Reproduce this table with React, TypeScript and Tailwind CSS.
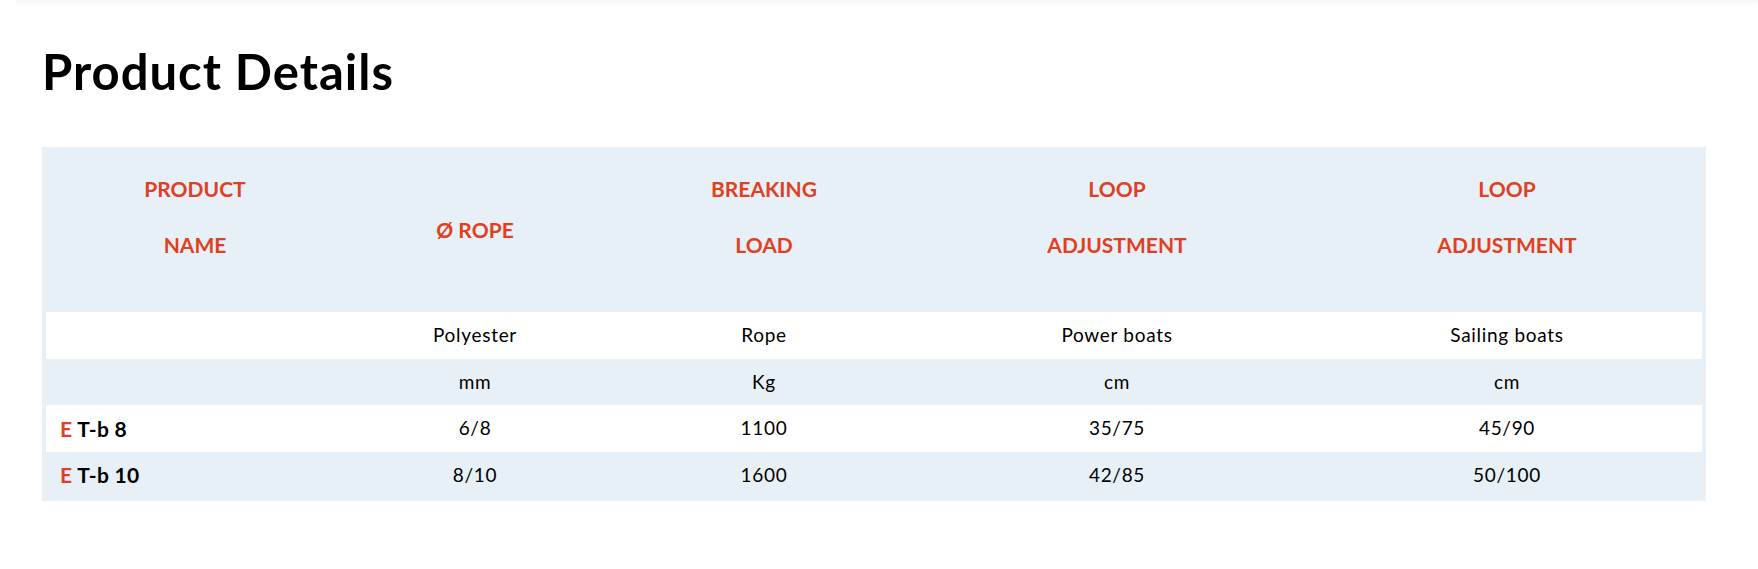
import { FC } from 'react';

const headers: Array<{ lines: string[] }> = [
  { lines: ['PRODUCT', 'NAME'] },
  { lines: ['Ø ROPE'] },
  { lines: ['BREAKING', 'LOAD'] },
  { lines: ['LOOP', 'ADJUSTMENT'] },
  { lines: ['LOOP', 'ADJUSTMENT'] },
];

const rows: Array<{ name?: string; cells: string[]; white: boolean; h: string }> = [
  { cells: ['Polyester', 'Rope', 'Power boats', 'Sailing boats'], white: true, h: 'h-[47px]' },
  { cells: ['mm', 'Kg', 'cm', 'cm'], white: false, h: 'h-[46px]' },
  { name: 'T-b 8', cells: ['6/8', '1100', '35/75', '45/90'], white: true, h: 'h-[47px]' },
  { name: 'T-b 10', cells: ['8/10', '1600', '42/85', '50/100'], white: false, h: 'h-[46px]' },
];

const cols = 'grid grid-cols-[298px_262px_316px_390px_390px]';

const App: FC = () => {
  return (
    <div className="min-h-screen w-full bg-white font-['Lato',sans-serif] text-black">
      <div className="ml-[16px] h-[6px] bg-gradient-to-b from-[#f5f5f5] to-white" />
      <div className="pl-[42px] pt-[41px]">
        <h1 className="text-[49px] font-bold leading-[48px] tracking-[1px]">Product Details</h1>

        <div className="mt-[52px] w-[1664px] bg-[#e8f0f7] px-1 pb-[3px]">
          <div className={`${cols} h-[165px]`}>
            {headers.map((h, i) => (
              <div
                key={i}
                className={`text-center text-[21px] font-bold leading-[56px] text-[#e0401f] ${
                  h.lines.length === 1 ? 'pt-[55px]' : 'pt-[14px]'
                }`}
              >
                {h.lines.map((l) => (
                  <div key={l}>{l}</div>
                ))}
              </div>
            ))}
          </div>

          {rows.map((r, i) => (
            <div
              key={i}
              className={`${cols} ${r.h} items-center text-[19px] tracking-[0.7px] ${r.white ? 'bg-white' : ''}`}
            >
              <div className="pl-[14px] text-[21px] font-bold tracking-[0.3px]">
                {r.name && (
                  <>
                    <span className="text-[#e0401f]">E</span> {r.name}
                  </>
                )}
              </div>
              {r.cells.map((c, j) => (
                <div key={j} className="text-center">
                  {c}
                </div>
              ))}
            </div>
          ))}
        </div>
      </div>
    </div>
  );
};

export default App;
